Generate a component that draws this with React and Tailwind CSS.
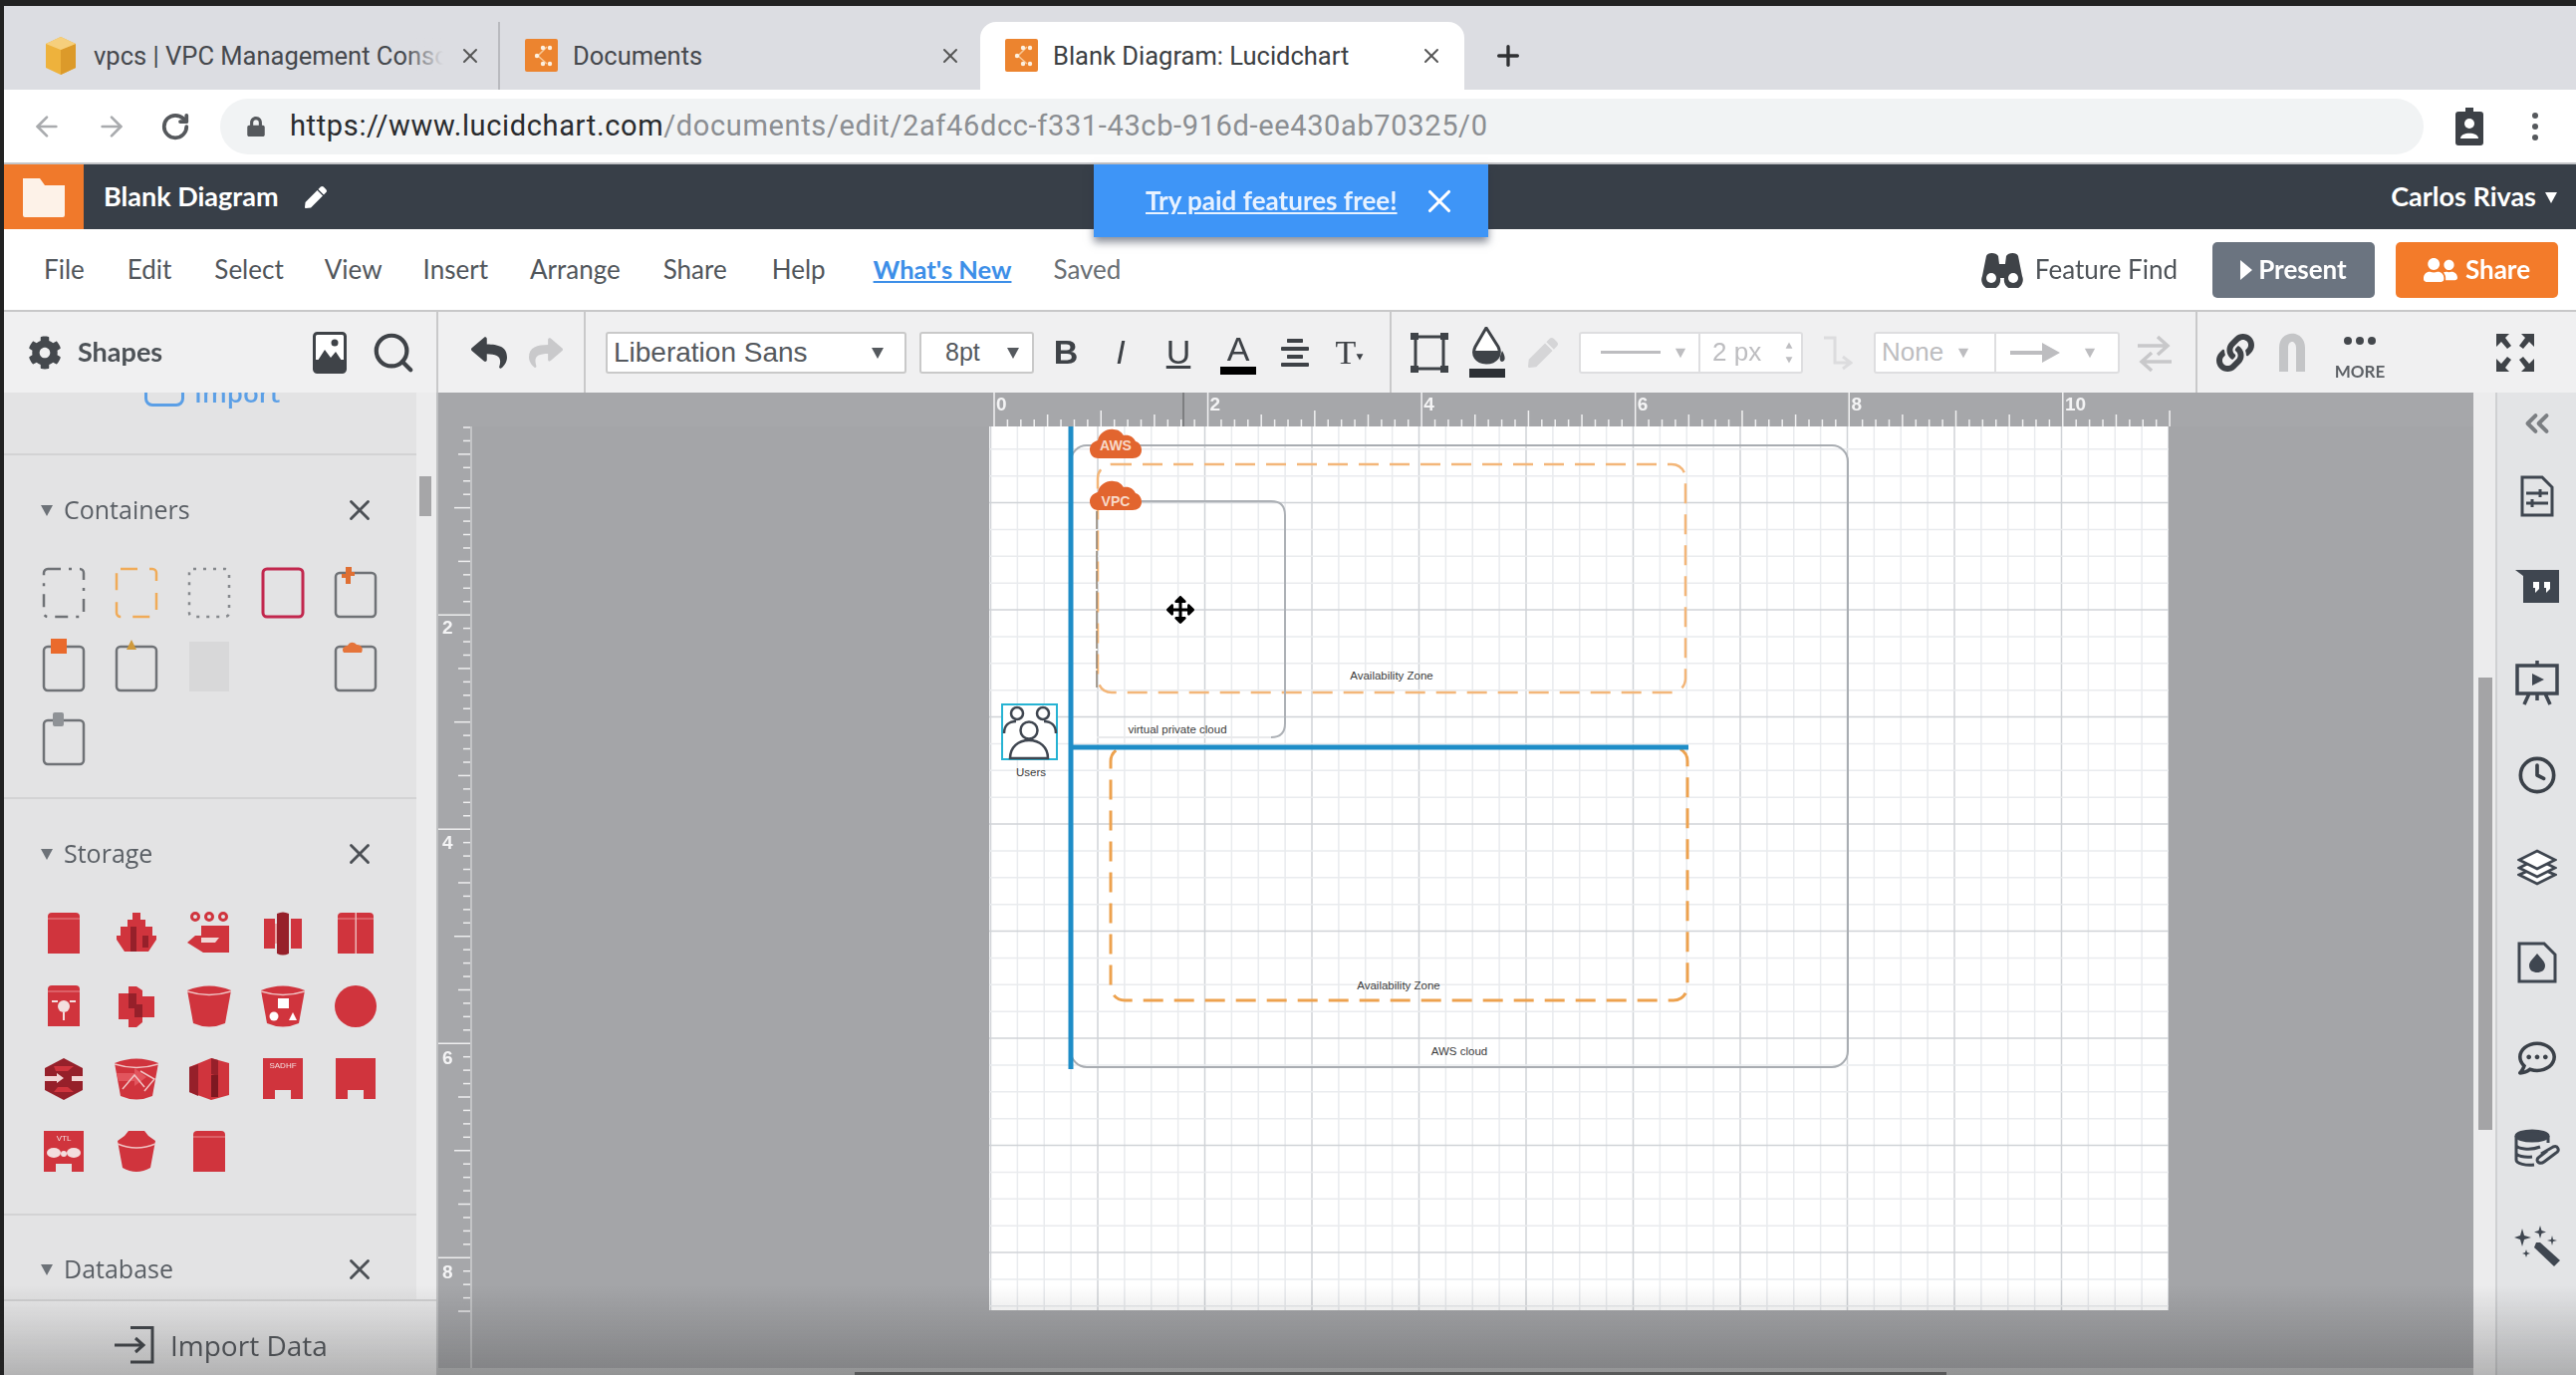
import React from "react";
import {
  FaArrowsAlt,
  FaCog,
  FaLink,
  FaLock,
  FaRegCommentDots,
  FaReply,
  FaShare,
  FaUserFriends,
  FaPen,
  FaAlignCenter,
} from "react-icons/fa";
import { LuChevronsLeft, LuClock, LuSearch, LuX, LuArrowLeft, LuArrowRight, LuRotateCw, LuPlus } from "react-icons/lu";

const ui = "font-['Lato','Open_Sans',sans-serif]";
const chrome = "font-['Roboto','Liberation_Sans',sans-serif]";
const DARK = "#3f4650";

const LucidFav = () => (
  <svg width="33" height="34" viewBox="0 0 33 34" className="shrink-0">
    <rect width="33" height="33" rx="2" fill="#ec842f" />
    <path d="M22 8 L13 17 L22 25" fill="none" stroke="#f7c796" strokeWidth="1.5" />
    <g fill="#fdf0e0">
      <circle cx="18" cy="9" r="2.2" />
      <circle cx="25" cy="9" r="2.2" />
      <circle cx="12" cy="17" r="2.2" />
      <circle cx="18" cy="25" r="2.2" />
      <circle cx="25" cy="25" r="2.2" />
    </g>
  </svg>
);

const AwsFav = () => (
  <svg width="30" height="38" viewBox="0 0 30 38" className="shrink-0">
    <path d="M15 0 L30 7 V31 L15 38 L0 31 V7Z" fill="#eeb23c" />
    <path d="M15 13 L30 7 V31 L15 38Z" fill="#dc9a2a" />
    <path d="M15 0 L30 7 L15 13 L0 7Z" fill="#f6cf7c" />
  </svg>
);

const Caret = ({ className = "" }) => (
  <svg width="14" height="14" viewBox="0 0 14 14" className={className}>
    <path d="M1 2 H13 L7 13Z" fill="currentColor" />
  </svg>
);

const Tool = ({ className = "", children }) => (
  <div className={`w-10 h-[60px] shrink-0 flex items-center justify-center ${className}`}>{children}</div>
);

const Select = ({ className = "", children }) => (
  <div className={`h-[42px] shrink-0 rounded-[3px] border-2 border-[#c9c9c9] bg-white flex items-center ${className}`}>
    {children}
  </div>
);

const TitleRow = ({ name }) => (
  <div className="h-[30px] flex items-center pl-[36px] pr-[40px]">
    <Caret className="text-[#6d7278] mr-[10px]" />
    <span className="text-[25px] text-[#5a5f65] font-['Open_Sans',sans-serif]">{name}</span>
    <LuX className="ml-auto text-[#4c5055]" size={34} strokeWidth={2} />
  </div>
);

// dashed / boxed container shapes in the side panel
const Box = ({ stroke = "#6f7276", dash, children, sw = 2.5, y = 8 }) => (
  <svg width="48" height="56" viewBox="0 0 48 56">
    <rect x="4" y={y} width="40" height={52 - y} rx="4" fill="none" stroke={stroke} strokeWidth={sw} strokeDasharray={dash} />
    {children}
  </svg>
);

const containers = [
  <Box key="a" dash="13 8 3 8" y={4} />,
  <Box key="b" stroke="#f0ab58" dash="17 12" y={4} />,
  <Box key="c" stroke="#85888c" dash="3 7" y={4} />,
  <Box key="d" stroke="#c2274d" sw={3} y={4} />,
  <Box key="e"><path d="M14 2 H20 V7 H23 V11 H19 V19 H14 V13 H10 V9 H14Z" fill="#df6f33" /></Box>,
  <Box key="f"><rect x="11" y="0" width="16" height="15" fill="#ea6a2c" /></Box>,
  <Box key="g"><path d="M14 11 L19 1 L24 11Z" fill="#cf9a3d" /></Box>,
  <div key="h" className="w-10 h-[50px] bg-[#d8d8d9]" />,
  null,
  <Box key="j"><path d="M12 14 C9 10 13 7 16 7 C18 3 22 3 25 6 C30 6 32 10 30 14Z" fill="#e5743a" /></Box>,
  <Box key="k"><rect x="13" y="0" width="11" height="14" rx="2" fill="#8f9296" /></Box>,
];

const R = "#d0343d";
const D = "#96202a";
const L = "#f3dede";
const Sv = ({ children }) => (
  <svg width="44" height="44" viewBox="0 0 44 44">{children}</svg>
);
const Chamfer = ({ x = 6, w = 32 }) => (
  <>
    <path d={`M${x} 42 V5 Q${x} 1 ${x + 4} 1 H${x + w - 4} Q${x + w} 1 ${x + w} 5 V42Z`} fill={R} />
    <path d={`M${x} 7 H${x + w}`} stroke="#e88a8f" strokeWidth="1" />
  </>
);
const Bucket = () => (
  <>
    <path d="M0 6 Q22 -3 44 6 L38 39 Q22 46 6 39Z" fill={R} />
    <path d="M0 7 Q22 14 44 7" stroke="#f0c4c4" strokeWidth="1.5" fill="none" />
  </>
);
const storage = [
  <Sv key="1"><Chamfer /></Sv>,
  <Sv key="2"><path d="M18 1 H26 V8 H31 V15 H38 V24 H42 V28 L34 40 H10 L2 28 V24 H6 V15 H13 V8 H18Z" fill={R} /><path d="M16 15 H22 V40 H16Z M28 24 H34 V36 H28Z" fill={D} /></Sv>,
  <Sv key="3"><g fill="none" stroke={R} strokeWidth="3"><circle cx="8" cy="5" r="3.5" /><circle cx="22" cy="5" r="3.5" /><circle cx="36" cy="5" r="3.5" /></g><path d="M14 14 H42 V41 H16 L0 31 L8 24 H14Z" fill={R} /><path d="M14 26 H32 L28 31 H14Z" fill="#f0d5d5" /></Sv>,
  <Sv key="4"><path d="M3 7 H14 V37 H3Z M30 7 H41 V37 H30Z" fill={R} /><path d="M16 2 Q22 -1 28 2 V42 Q22 45 16 42Z" fill={D} /><path d="M14 12 H16 V32 H14Z" fill="#e7a5a5" /></Sv>,
  <Sv key="5"><Chamfer x={4} w={36} /><path d="M21.5 1 H23 V42 H21.5Z" fill="#ecb5b5" /></Sv>,
  <Sv key="6"><Chamfer /><circle cx="22" cy="22" r="6" fill={L} /><path d="M21 28 H23 V36 H21Z M10 16 H16 V18 H10Z M28 16 H34 V18 H28Z" fill={L} /></Sv>,
  <Sv key="7"><path d="M4 9 H14 V2 H22 L28 6 V12 H40 V33 H28 V38 L22 43 H14 V35 H4Z" fill={R} /><path d="M14 9 H22 V20 H28 V33 H20 V24 H14Z" fill={D} /></Sv>,
  <Sv key="8"><Bucket /></Sv>,
  <Sv key="9"><Bucket /><rect x="17" y="14" width="11" height="10" fill="#fff" /><circle cx="13" cy="32" r="4.5" fill="#fff" /><path d="M28 36 L32 28 L36 36Z" fill="#fff" /></Sv>,
  <Sv key="10"><circle cx="22" cy="22" r="21" fill={R} /></Sv>,
  <Sv key="11"><path d="M22 1 L41 11 V33 L22 43 L3 33 V11Z" fill={D} /><path d="M3 19 H15 V16 L22 21 L15 26 V24 H3Z M41 19 H30 V24 H41Z" fill="#f1d6d6" /><path d="M12 9 L32 9 L26 14 H14Z M12 35 H32 L26 30 H16Z" fill={R} /></Sv>,
  <Sv key="12"><Bucket /><path d="M2 16 H20 V11 L32 20 L20 29 V24 H4Z" fill="#e2555d" /><path d="M8 32 L20 18 L30 30 M26 14 L40 22 L30 34" stroke="#f0c4c4" strokeWidth="1.5" fill="none" /></Sv>,
  <Sv key="13"><path d="M2 10 L24 1 L42 6 V38 L24 43 L2 35Z" fill={R} /><path d="M2 10 L11 7 V39 L2 35Z M24 1 L31 3 V19 L24 17Z" fill={D} /><path d="M24 18 H31 V40 H24Z" fill="#7e1821" /></Sv>,
  <Sv key="14">
    <path d="M2 1 H42 V42 H30 V33 H14 V42 H2Z" fill={R} />
    <text x="22" y="11" textAnchor="middle" fontSize="8" fill={L} fontFamily="Liberation Sans, sans-serif">SADHF</text>
  </Sv>,
  <Sv key="15"><path d="M2 1 H42 V42 H30 V33 H14 V42 H2Z" fill={R} /></Sv>,
  <Sv key="16">
    <path d="M2 1 H42 V42 H30 V34 H14 V42 H2Z" fill={R} />
    <text x="22" y="11" textAnchor="middle" fontSize="8" fill={L} fontFamily="Liberation Sans, sans-serif">VTL</text>
    <ellipse cx="12" cy="23" rx="7" ry="5" fill={L} />
    <ellipse cx="32" cy="23" rx="7" ry="5" fill={L} />
    <circle cx="22" cy="24" r="3" fill={L} />
  </Sv>,
  <Sv key="17"><path d="M10 6 L14 1 H30 L34 6 L41 11 L36 38 Q22 46 8 38 L3 11Z" fill={R} /><path d="M3 14 Q22 22 41 14" stroke="#f0c4c4" strokeWidth="1.5" fill="none" /></Sv>,
  <Sv key="18"><Chamfer /></Sv>,
];

const minorX = Array.from({ length: 45 }, (_, i) => 1.5 + i * 26.875);
const minorY = Array.from({ length: 34 }, (_, i) => 22.75 + i * 26.875);
const topTicks = Array.from({ length: 89 }, (_, k) => k);
const sideTicks = Array.from({ length: 80 }, (_, k) => k);

const CloudBadge = ({ x, y }) => (
  <path
    transform={`translate(${x} ${y})`}
    d="M9 32 C2 32 0 27 0 23 C0 18 4 15 8 14 C10 6 17 2 24 3 C29 3 32 6 34 9 C40 8 44 11 46 15 C50 16 52 20 52 24 C52 29 48 32 43 32 Z"
    fill="#e2652f"
  />
);

const label = "absolute text-center text-[11.5px] leading-[14px] text-[#3c3c3c] font-['Liberation_Sans',sans-serif]";
const badge = "absolute left-[101px] w-[52px] text-center text-[14px] font-bold text-[#f8d9c8] font-['Liberation_Sans',sans-serif]";

const Page = () => (
  <div className="relative w-[1184px] h-[887px] ml-[519px] bg-white shrink-0">
    <svg width="1184" height="887" className="block">
      {minorX.map((x, i) => (
        <line key={i} x1={x} x2={x} y1="0" y2="887" stroke={i % 4 === 0 ? "#d0d3d7" : "#e9ebee"} strokeWidth="1.5" />
      ))}
      {minorY.map((y, i) => (
        <line key={i} x1="0" x2="1184" y1={y} y2={y} stroke={(i + 2) % 4 === 0 ? "#d0d3d7" : "#e9ebee"} strokeWidth="1.5" />
      ))}
      <rect x="82" y="19" width="780" height="624" rx="16" fill="none" stroke="#a9adb2" strokeWidth="2" />
      <rect x="109" y="38" width="590" height="229" rx="14" fill="none" stroke="#f3b679" strokeWidth="2.5" strokeDasharray="20 11" />
      <path d="M153 75 H283 Q297 75 297 89 V298 Q297 312 283 312" fill="none" stroke="#adb1b6" strokeWidth="2" />
      <path d="M283 312 H108" fill="none" stroke="#e9eaec" strokeWidth="2" />
      <path d="M108 85 V262" fill="none" stroke="#8d8276" strokeWidth="1.5" strokeDasharray="18 2" />
      <rect x="122" y="322" width="579" height="254" rx="14" fill="none" stroke="#eda24f" strokeWidth="3" strokeDasharray="20 11" />
      <line x1="82" x2="82" y1="0" y2="645" stroke="#1e8dc7" strokeWidth="5" />
      <line x1="82" x2="702" y1="322" y2="322" stroke="#1e8dc7" strokeWidth="5" />
      <CloudBadge x={101} y={0} />
      <CloudBadge x={101} y={52} />
      <rect x="13" y="279" width="55" height="55" fill="#fff" stroke="#27b3d3" strokeWidth="2" />
      <g fill="none" stroke="#3f4650" strokeWidth="2.5">
        <circle cx="28" cy="288" r="6" />
        <circle cx="54" cy="288" r="6" />
        <path d="M15 308 C15 300 20 296 27 296 M67 308 C67 300 62 296 55 296" />
        <circle cx="40" cy="305" r="8.5" fill="#fff" />
        <path d="M21 333 C21 322 29 315 40 315 C51 315 59 322 59 333 Z" fill="#fff" />
      </g>
    </svg>
    <span className={`${badge} top-[9px]`}>AWS</span>
    <span className={`${badge} top-[65px]`}>VPC</span>
    <span className={`${label} left-[359px] top-[243px] w-[90px]`}>Availability Zone</span>
    <span className={`${label} left-[139px] top-[297px] w-[100px]`}>virtual private cloud</span>
    <span className={`${label} left-[366px] top-[554px] w-[90px]`}>Availability Zone</span>
    <span className={`${label} left-[432px] top-[620px] w-[80px]`}>AWS cloud</span>
    <span className={`${label} left-[22px] top-[340px] w-[40px]`}>Users</span>
    <FaArrowsAlt className="absolute left-[178px] top-[170px] text-black" size={28} />
  </div>
);

const App = () => (
  <div className={`relative w-[2586px] h-[1380px] overflow-hidden bg-[#222] flex flex-col ${ui}`}>
    <div className="h-[6px] shrink-0 bg-[#222]" />
    <div className="flex-1 min-h-0 flex">
      <div className="w-1 shrink-0 bg-[#222]" />
      <div className="flex-1 min-w-0 flex flex-col blur-[0.6px]">
        {/* browser tabs */}
        <div className={`h-[84px] shrink-0 bg-[#dcdde2] flex items-end ${chrome}`}>
          <div className="w-[498px] h-[68px] shrink-0 flex items-center pl-[42px] border-r-2 border-[#b9babf]">
            <AwsFav />
            <div className="relative ml-[18px] w-[351px] overflow-hidden whitespace-nowrap text-[25.5px] text-[#45484d]">
              vpcs | VPC Management Console
              <div className="absolute right-0 top-0 h-full w-10 bg-gradient-to-r from-transparent to-[#dcdde2]" />
            </div>
            <LuX className="ml-[15px] text-[#555]" size={24} />
          </div>
          <div className="w-[482px] h-[68px] shrink-0 flex items-center pl-[25px]">
            <LucidFav />
            <span className="ml-[15px] text-[25.5px] text-[#45484d]">Documents</span>
            <LuX className="ml-auto mr-[18px] text-[#555]" size={24} />
          </div>
          <div className="w-[486px] h-[68px] shrink-0 bg-white rounded-t-[16px] flex items-center pl-[25px]">
            <LucidFav />
            <span className="ml-[15px] text-[25.5px] text-[#3c4043]">Blank Diagram: Lucidchart</span>
            <LuX className="ml-auto mr-[21px] text-[#555]" size={24} />
          </div>
          <LuPlus className="ml-[28px] mb-[18px] text-[#2f3033]" size={32} strokeWidth={2.5} />
        </div>
        {/* address bar */}
        <div className={`h-[75px] shrink-0 bg-white border-b-2 border-[#c4c5c8] flex items-center ${chrome}`}>
          <LuArrowLeft className="ml-[27px] text-[#a9abae]" size={32} strokeWidth={2} />
          <LuArrowRight className="ml-[33px] text-[#a9abae]" size={32} strokeWidth={2} />
          <LuRotateCw className="ml-[33px] text-[#55585c]" size={30} strokeWidth={3} />
          <div className="ml-[30px] w-[2212px] h-[56px] rounded-full bg-[#f1f3f4] flex items-center pl-[26px]">
            <FaLock className="text-[#55585c]" size={20} />
            <span className="ml-[24px] text-[29px] tracking-[0.64px] text-[#292b2e] whitespace-nowrap">
              https://www.lucidchart.com<span className="text-[#8b8e92]">/documents/edit/2af46dcc-f331-43cb-916d-ee430ab70325/0</span>
            </span>
          </div>
          <svg width="30" height="40" viewBox="0 0 30 40" className="ml-[31px]">
            <rect x="1" y="5" width="28" height="34" rx="3" fill="#3d4147" />
            <rect x="11" y="1" width="8" height="7" fill="#3d4147" />
            <circle cx="15" cy="17" r="5" fill="#fff" />
            <path d="M6 32 C6 25 24 25 24 32Z" fill="#fff" />
          </svg>
          <div className="ml-[48px] flex flex-col gap-[5px]">
            <div className="w-[6px] h-[6px] rounded-full bg-[#55585c]" />
            <div className="w-[6px] h-[6px] rounded-full bg-[#55585c]" />
            <div className="w-[6px] h-[6px] rounded-full bg-[#55585c]" />
          </div>
        </div>
        {/* lucid header */}
        <div className="relative h-[65px] shrink-0 bg-[#383f48] flex items-center">
          <div className="w-[80px] h-full bg-[#f0792b] flex items-center justify-center">
            <svg width="42" height="40" viewBox="0 0 42 40">
              <path d="M0 1 H17 L22 8 H42 V38 Q42 40 40 40 H2 Q0 40 0 38Z" fill="#fdf2e8" />
            </svg>
          </div>
          <span className="ml-[20px] text-[27px] font-bold text-white">Blank Diagram</span>
          <FaPen className="ml-[26px] text-white" size={22} />
          <span className="ml-auto mr-[8px] text-[27px] font-bold text-white">Carlos Rivas</span>
          <Caret className="mr-[18px] text-white" />
          <div className="absolute left-[1094px] top-0 w-[396px] h-[73px] bg-[#3e95f7] shadow-[0_5px_8px_rgba(40,50,70,0.55)] flex items-center pl-[52px] z-10">
            <span className="text-[26px] font-bold text-[#e8f2ff] underline">Try paid features free!</span>
            <LuX className="ml-[23px] text-white" size={38} strokeWidth={2} />
          </div>
        </div>
        {/* menu bar */}
        <div className="h-[81px] shrink-0 bg-white flex items-center text-[26px] text-[#51565b]">
          <span className="ml-[40px]">File</span>
          <span className="ml-[43px]">Edit</span>
          <span className="ml-[43px]">Select</span>
          <span className="ml-[41px]">View</span>
          <span className="ml-[41px]">Insert</span>
          <span className="ml-[42px]">Arrange</span>
          <span className="ml-[43px]">Share</span>
          <span className="ml-[45px]">Help</span>
          <span className="ml-[48px] text-[25.5px] text-[#3d8fe8] font-bold underline">What's New</span>
          <span className="ml-[42px] text-[#6a6f74]">Saved</span>
          <svg width="42" height="36" viewBox="0 0 42 36" className="ml-auto text-[#3f4348]">
            <path d="M5 4 C6 0 15 0 17 4 L18 12 H24 L25 4 C27 0 36 0 37 4 L41 24 A9.5 9.5 0 1 1 23 26 H19 A9.5 9.5 0 1 1 1 24Z" fill="currentColor" />
            <circle cx="10" cy="26" r="5" fill="#fff" />
            <circle cx="32" cy="26" r="5" fill="#fff" />
          </svg>
          <span className="ml-[12px] text-[#4f5459]">Feature Find</span>
          <div className="ml-[35px] w-[163px] h-[56px] rounded-[5px] bg-[#6b7480] flex items-center justify-center gap-[6px] text-white font-bold">
            <svg width="12" height="20" viewBox="0 0 12 20"><path d="M0 0 L12 10 L0 20Z" fill="#fff" /></svg>
            Present
          </div>
          <div className="ml-[21px] mr-[18px] w-[163px] h-[56px] rounded-[5px] bg-[#f37b2a] flex items-center justify-center gap-[8px] text-white font-bold">
            <FaUserFriends size={34} />
            Share
          </div>
        </div>
        {/* toolbar */}
        <div className="h-[83px] shrink-0 bg-[#f0f0f1] border-t-2 border-[#c8c8c9] flex items-center text-[#3e4247]">
          <div className="w-[436px] h-full shrink-0 border-r-2 border-[#c9c9ca] flex items-center pl-[24px]">
            <FaCog size={34} className="text-[#44484d]" />
            <span className="ml-[16px] text-[27px] font-bold text-[#4d5257]">Shapes</span>
            <svg width="34" height="42" viewBox="0 0 34 42" className="ml-[151px]">
              <rect x="1.5" y="1.5" width="31" height="39" rx="3" fill="#fff" stroke="#3f4348" strokeWidth="3" />
              <rect x="3" y="28" width="28" height="11" fill="#3f4348" />
              <path d="M3 32 L12 18 L18 26 L23 20 L31 32Z" fill="#3f4348" />
              <circle cx="22" cy="11" r="3.5" fill="#3f4348" />
            </svg>
            <LuSearch size={46} strokeWidth={2.2} className="ml-[24px] text-[#3f4348]" />
          </div>
          <div className="w-[148px] h-full shrink-0 border-r-2 border-[#c9c9ca] flex items-center pl-[33px]">
            <FaReply size={36} className="text-[#3f4348]" />
            <FaShare size={34} className="ml-[22px] text-[#c9c9cb]" />
          </div>
          <div className="w-[809px] h-full shrink-0 border-r-2 border-[#c9c9ca] flex items-center pl-[20px]">
            <Select className="w-[302px] pl-[6px] pr-[20px] text-[28px] text-[#55595e] font-['Liberation_Sans',sans-serif]">
              Liberation Sans
              <Caret className="ml-auto text-[#55595e]" />
            </Select>
            <Select className="ml-[13px] w-[115px] pl-[24px] pr-[12px] text-[25px] text-[#55595e] font-['Liberation_Sans',sans-serif]">
              8pt
              <Caret className="ml-auto text-[#55595e]" />
            </Select>
            <Tool className="ml-[12px] text-[34px] font-bold font-['Liberation_Sans',sans-serif]">B</Tool>
            <Tool className="ml-[15px] text-[34px] italic font-['Liberation_Sans',sans-serif]">I</Tool>
            <Tool className="ml-[18px] text-[34px] underline font-['Liberation_Sans',sans-serif]">U</Tool>
            <Tool className="ml-[20px]">
              <div className="flex flex-col items-center text-[34px] leading-[36px] font-['Liberation_Sans',sans-serif]">
                A
                <div className="w-9 h-[8px] bg-black" />
              </div>
            </Tool>
            <Tool className="ml-[17px]"><FaAlignCenter size={32} /></Tool>
            <Tool className="ml-[15px] text-[34px] font-['Liberation_Serif',serif]">
              T<Caret className="w-2 h-2 mt-2" />
            </Tool>
          </div>
          <div className="w-[809px] h-full shrink-0 border-r-2 border-[#c9c9ca] flex items-center pl-[18px]">
            <Tool>
              <svg width="38" height="40" viewBox="0 0 38 40">
                <rect x="5" y="4" width="28" height="32" fill="none" stroke="#3f4348" strokeWidth="3" />
                <path d="M0 0 H8 V7 H0Z M30 0 H38 V7 H30Z M0 33 H8 V40 H0Z M30 33 H38 V40 H30Z" fill="#3f4348" />
              </svg>
            </Tool>
            <Tool className="ml-[19px]">
              <svg width="40" height="52" viewBox="0 0 40 52">
                <path d="M18 1 L30 20 C34 28 28 36 18 36 C8 36 3 28 7 20Z" fill="#fff" stroke="#3f4348" strokeWidth="3" />
                <path d="M6 24 H31 C32 32 26 36 18 36 C10 36 5 31 6 24Z M34 24 C37 29 38 34 34 35 C30 34 32 29 34 24Z" fill="#3f4348" />
                <rect x="1" y="42" width="36" height="9" fill="#2c3035" />
              </svg>
            </Tool>
            <Tool className="ml-[15px]"><FaPen size={30} className="text-[#d5d5d7]" /></Tool>
            <Select className="ml-[16px] w-[225px] border-[#dedee0] bg-[#f2f2f3] text-[#bdbdc0] text-[26px] font-['Liberation_Sans',sans-serif]">
              <div className="w-[120px] h-full border-r-2 border-[#dedee0] flex items-center pl-[20px]">
                <div className="w-[60px] h-[3px] bg-[#bdbdc0]" />
                <Caret className="ml-[14px] w-3 h-3" />
              </div>
              <span className="ml-[12px]">2 px</span>
              <div className="ml-auto mr-[8px] flex flex-col gap-[6px]">
                <Caret className="w-2 h-2 rotate-180" />
                <Caret className="w-2 h-2" />
              </div>
            </Select>
            <Tool className="ml-[15px]">
              <svg width="30" height="36" viewBox="0 0 30 36">
                <path d="M1 3 H12 V28 H26 M20 22 L28 28 L20 34" fill="none" stroke="#dcdcde" strokeWidth="3" />
              </svg>
            </Tool>
            <Select className="ml-[16px] w-[247px] border-[#dedee0] bg-[#f2f2f3] text-[#bdbdc0] text-[26px] font-['Liberation_Sans',sans-serif]">
              <div className="w-[121px] h-full border-r-2 border-[#dedee0] flex items-center pl-[6px]">
                None
                <Caret className="ml-[14px] w-3 h-3" />
              </div>
              <svg width="50" height="24" viewBox="0 0 50 24" className="ml-[14px]">
                <path d="M0 10 H32 V2 L50 12 L32 22 V14 H0Z" fill="#bdbdc0" />
              </svg>
              <Caret className="ml-[24px] w-3 h-3" />
            </Select>
            <Tool className="ml-[15px]">
              <svg width="38" height="40" viewBox="0 0 38 40">
                <path d="M2 13 H30 M22 4 L32 13 L22 22 M36 29 H8 M16 20 L6 29 L16 38" fill="none" stroke="#c8c8ca" strokeWidth="3.5" />
              </svg>
            </Tool>
          </div>
          <div className="flex-1 h-full flex items-center pl-[18px]">
            <Tool><FaLink size={38} className="text-[#3f4348]" /></Tool>
            <Tool className="ml-[17px]">
              <svg width="30" height="42" viewBox="0 0 30 42">
                <path d="M2 40 V16 C2 -3 28 -3 28 16 V40 H19 V16 C19 8 11 8 11 16 V40Z" fill="#c4c5c7" />
              </svg>
            </Tool>
            <div className="ml-[28px] w-10 flex flex-col items-center pt-[13px]">
              <div className="flex gap-[4px] mb-[17px]">
                <div className="w-[8px] h-[8px] rounded-full bg-[#44484d]" />
                <div className="w-[8px] h-[8px] rounded-full bg-[#44484d]" />
                <div className="w-[8px] h-[8px] rounded-full bg-[#44484d]" />
              </div>
              <span className="text-[17px] leading-[20px] text-[#5d6166] font-bold">MORE</span>
            </div>
            <Tool className="ml-[116px]">
              <svg width="38" height="38" viewBox="0 0 38 38" fill="#3f4348">
                <path d="M0 0 H13 L9 4 L15 12 L11 15 L5 8 L0 13Z M38 0 H25 L29 4 L23 12 L27 15 L33 8 L38 13Z M0 38 H13 L9 34 L15 26 L11 23 L5 30 L0 25Z M38 38 H25 L29 34 L23 26 L27 23 L33 30 L38 25Z" />
              </svg>
            </Tool>
          </div>
        </div>
        {/* workspace */}
        <div className="flex-1 min-h-0 flex">
          <div className="w-[436px] shrink-0 flex flex-col border-r-2 border-[#bfc0c2]">
            <div className="flex-1 min-h-0 flex">
              <div className="w-[414px] shrink-0 bg-[#e3e3e4] flex flex-col overflow-hidden font-['Open_Sans',sans-serif]">
                <div className="h-[63px] shrink-0 border-b-2 border-[#d3d3d4] overflow-hidden flex pl-[141px]">
                  <div className="w-[40px] h-[30px] -mt-[16px] rounded-[8px] border-[3px] border-[#5b9fe6]" />
                  <span className="ml-[10px] -mt-[19px] text-[26px] font-semibold text-[#5b9fe6]">Import</span>
                </div>
                <div className="h-[345px] shrink-0 pt-[40px] border-b-2 border-[#d3d3d4]">
                  <TitleRow name="Containers" />
                  <div className="mt-[31px] pl-[23px] grid grid-cols-[repeat(5,73.4px)] auto-rows-[74px]">
                    {containers.map((c, i) => (
                      <div key={i} className="flex items-center justify-center">{c}</div>
                    ))}
                  </div>
                </div>
                <div className="h-[418px] shrink-0 pt-[40px] border-b-2 border-[#d3d3d4]">
                  <TitleRow name="Storage" />
                  <div className="mt-[28px] pl-[23px] grid grid-cols-[repeat(5,73.4px)] auto-rows-[73px]">
                    {storage.map((c, i) => (
                      <div key={i} className="flex items-center justify-center">{c}</div>
                    ))}
                  </div>
                </div>
                <div className="flex-1 pt-[39px]">
                  <TitleRow name="Database" />
                </div>
              </div>
              <div className="flex-1 bg-[#ececed] pt-[84px] pl-[3px]">
                <div className="w-[12px] h-[40px] bg-[#a6a6a8]" />
              </div>
            </div>
            <div className="h-[76px] shrink-0 bg-[#e9e9ea] border-t-2 border-[#d0d0d1] flex items-center pl-[111px] pt-[14px] font-['Open_Sans',sans-serif] text-[28px] text-[#55595e]">
              <svg width="48" height="38" viewBox="0 0 48 38" fill="none" stroke="#44484d" strokeWidth="3">
                <path d="M16 1.5 H38 V36 H16 M0 19 H28 M21 12 L29 19 L21 26" />
              </svg>
              <span className="ml-[8px]">Import Data</span>
            </div>
          </div>
          <div className="flex-1 min-w-0 flex flex-col bg-[#a4a5a8]">
            <svg width="2043" height="34" className="block shrink-0 bg-[#a6a7aa]">
              {topTicks.map((k) => {
                const x = 558 + k * 13.41;
                const h = k % 16 === 0 ? 34 : k % 8 === 0 ? 16 : k % 4 === 0 ? 12 : 7;
                return <line key={k} x1={x} x2={x} y1={34 - h} y2="34" stroke="#f1f1f2" strokeWidth="1.5" />;
              })}
              <line x1="748" x2="748" y1="0" y2="34" stroke="#6f7072" strokeWidth="1.5" />
              {[0, 2, 4, 6, 8, 10].map((n, i) => (
                <text key={n} x={560 + i * 214.6} y="18" fontSize="19" fontWeight="700" fill="#f4f4f5" fontFamily="Liberation Sans, sans-serif">{n}</text>
              ))}
            </svg>
            <div className="flex-1 min-h-0 flex">
              <svg width="32" height="945" className="block shrink-0 bg-[#a6a7aa]">
                {sideTicks.map((k) => {
                  const y = 1 + k * 13.44;
                  if (y > 889) return null;
                  const off = (k - 14 + 160) % 16;
                  const w = off === 0 ? 32 : off % 8 === 0 ? 16 : off % 4 === 0 ? 12 : 7;
                  return <line key={k} x1={32 - w} x2="32" y1={y} y2={y} stroke="#eeeeef" strokeWidth="1.5" />;
                })}
                {[[2, 208], [4, 424], [6, 640], [8, 855]].map(([n, y]) => (
                  <text key={n} x="4" y={y} fontSize="19" fontWeight="700" fill="#f4f4f5" fontFamily="Liberation Sans, sans-serif">{n}</text>
                ))}
              </svg>
              <div className="flex-1 min-w-0 flex flex-col border-l-2 border-[#c3c4c6]">
                <Page />
              </div>
            </div>
            <div className="h-[7px] shrink-0 bg-[#bcbdbe] flex items-end pl-[418px]">
              <div className="w-[1096px] h-[3px] bg-[#6b6c6d]" />
            </div>
          </div>
          <div className="w-[22px] shrink-0 bg-[#ececed] pt-[286px] pl-[5px]">
            <div className="w-[14px] h-[454px] bg-[#a4a4a6]" />
          </div>
          <div className="w-[81px] shrink-0 bg-[#e3e4e6] border-l-2 border-[#cfd0d2] flex flex-col items-center text-[#3b4149]">
            <LuChevronsLeft className="mt-[12px] text-[#7b7e82] shrink-0" size={38} strokeWidth={2.5} />
            <svg width="34" height="42" viewBox="0 0 34 42" className="mt-[33px] shrink-0" fill="none" stroke={DARK} strokeWidth="3">
              <path d="M2 2 H22 L32 12 V40 H2Z M6 18 H28 M6 28 H28" />
              <path d="M20 14 V22 M12 24 V32" />
            </svg>
            <svg width="44" height="36" viewBox="0 0 44 36" className="mt-[53px] shrink-0">
              <path d="M0 0 H44 V33 H8 V6Z" fill={DARK} />
              <path d="M18 12 H24 V19 L20 23 V18 H18Z M29 12 H35 V19 L31 23 V18 H29Z" fill="#fff" />
            </svg>
            <svg width="44" height="46" viewBox="0 0 44 46" className="mt-[55px] shrink-0" fill="none" stroke={DARK} strokeWidth="3.5">
              <path d="M2 5 H42 V33 H2Z M22 0 V5 M22 33 V40 M14 33 L9 44 M30 33 L35 44" />
              <path d="M17 13 L29 19 L17 25Z" fill={DARK} strokeWidth="0" />
            </svg>
            <LuClock className="mt-[49px] shrink-0" size={40} strokeWidth={2.2} />
            <svg width="40" height="44" viewBox="0 0 40 44" className="mt-[52px] shrink-0" fill="#fff" stroke={DARK} strokeWidth="2.8">
              <path d="M2 28 L20 37 L38 28 L20 20Z" />
              <path d="M2 21 L20 30 L38 21 L20 12Z" />
              <path d="M2 13 L20 22 L38 13 L20 4Z" />
            </svg>
            <svg width="40" height="42" viewBox="0 0 40 42" className="mt-[51px] shrink-0">
              <path d="M2 2 H27 L38 13 V40 H2Z" fill="none" stroke={DARK} strokeWidth="3" />
              <path d="M20 12 C24 17 28 20 28 24 C28 29 24 31 20 31 C16 31 12 29 12 24 C12 20 16 17 20 12Z" fill={DARK} />
            </svg>
            <FaRegCommentDots className="mt-[56px] shrink-0" size={38} />
            <svg width="46" height="42" viewBox="0 0 46 42" className="mt-[52px] shrink-0" fill="none" stroke={DARK} strokeWidth="3">
              <ellipse cx="18" cy="7" rx="16" ry="5" fill={DARK} />
              <path d="M2 7 V31 C2 35 12 37 20 36 M2 16 C2 20 16 22 26 18 M2 24 C2 27 10 29 18 28 M34 7 V14" />
              <path d="M27 25 L39 18 C44 16 46 22 42 24 L30 33 C26 36 21 33 24 29 L33 22" />
            </svg>
            <svg width="46" height="46" viewBox="0 0 46 46" className="mt-[52px] shrink-0" fill={DARK}>
              <path d="M8 6 L10 13 L17 15 L10 17 L8 24 L6 17 L0 15 L6 13Z" />
              <path d="M26 3 L27.5 8 L32 9.5 L27.5 11 L26 16 L24.5 11 L20 9.5 L24.5 8Z" />
              <path d="M38 13 L39 17 L43 18 L39 19 L38 23 L37 19 L33 18 L37 17Z" />
              <path d="M12 27 L13 30 L16 31 L13 32 L12 35 L11 32 L8 31 L11 30Z" />
              <path d="M22 20 L26 20 L46 38 L40 44 L20 25Z" />
            </svg>
          </div>
        </div>
      </div>
    </div>
    {/* video fade at the bottom */}
    <div className="absolute left-0 right-0 bottom-0 h-[90px] bg-gradient-to-b from-transparent to-[rgba(40,40,40,0.28)] pointer-events-none" />
  </div>
);

export default App;
